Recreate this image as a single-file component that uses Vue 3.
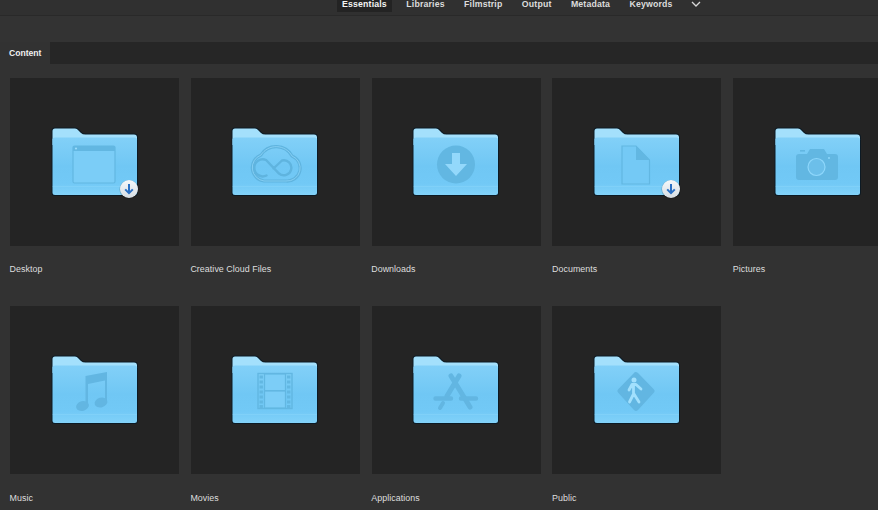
<script setup>
const tabs = ["Essentials", "Libraries", "Filmstrip", "Output", "Metadata", "Keywords"];

const folders = [
  { name: "Desktop", icon: "window", badge: true },
  { name: "Creative Cloud Files", icon: "cloud" },
  { name: "Downloads", icon: "download" },
  { name: "Documents", icon: "document", badge: true },
  { name: "Pictures", icon: "camera" },
  { name: "Music", icon: "music" },
  { name: "Movies", icon: "film" },
  { name: "Applications", icon: "apps" },
  { name: "Public", icon: "public" },
];

const perforations = [32.5, 37.5, 42.5, 47.5, 52.5, 57.5, 62];
</script>

<template>
  <div class="app">
    <header class="topbar">
      <nav class="tabs">
        <span v-for="(tab, i) in tabs" :key="tab" class="tab" :class="{ active: i === 0 }">{{ tab }}</span>
        <svg class="chevron" width="10" height="6" viewBox="0 0 10 6">
          <path d="M1 1 L5 5 L9 1" fill="none" stroke="#d8d8d8" stroke-width="1.3" />
        </svg>
      </nav>
    </header>
    <div class="toolbar"></div>
    <div class="panel-head">
      <div class="panel-tab">Content</div>
    </div>
    <main class="grid">
      <div v-for="f in folders" :key="f.name" class="item">
        <div class="tile">
          <svg width="110" height="95" viewBox="0 0 110 95" class="folder">
            <defs>
              <linearGradient id="body" x1="0" y1="0" x2="0" y2="1">
                <stop offset="0" stop-color="#82d0f8" />
                <stop offset="0.5" stop-color="#70c7f4" />
                <stop offset="0.8" stop-color="#72c9f6" />
                <stop offset="1" stop-color="#82d2f9" />
              </linearGradient>
              <linearGradient id="badge" x1="0" y1="0" x2="0" y2="1">
                <stop offset="0" stop-color="#f6f8fa" />
                <stop offset="1" stop-color="#d6dde3" />
              </linearGradient>
            </defs>
            <path
              d="M15 12.5 H35 Q37.5 12.5 39 14.5 L41.5 17 Q43 18.5 45.5 18.5 H94 Q98 18.5 98 22.5 V77.5 Q98 81 94.5 81 H15 Q11.5 81 11.5 77.5 V16 Q11.5 12.5 15 12.5 Z"
              fill="#0c1a24"
            />
            <path
              d="M15 13.5 H35 Q37 13.5 38.5 15.5 L41 18 Q42.5 19.5 45.5 19.5 H94 Q97 19.5 97 22.5 V30 H12.5 V16 Q12.5 13.5 15 13.5 Z"
              fill="#a4e0fc"
            />
            <path
              d="M12.5 24.5 Q12.5 22.5 15 22.5 H94.5 Q97 22.5 97 24.5 V77.5 Q97 80 94.5 80 H15 Q12.5 80 12.5 77.5 Z"
              fill="url(#body)"
            />
            <rect x="12.5" y="71" width="84.5" height="0.8" fill="#9be0fe" opacity="0.35" />

            <g v-if="f.icon === 'window'">
              <rect x="33" y="31" width="42" height="37" rx="1.5" fill="#7bcdf7" stroke="#62b7e2" stroke-width="1.2" />
              <rect x="33" y="31" width="42" height="5" fill="#62b7e2" />
              <circle cx="36" cy="33.5" r="1.1" fill="#9bdcfc" />
            </g>

            <g v-else-if="f.icon === 'cloud'" fill="none">
              <path
                d="M44 66 H66 A13 13 0 0 0 72 41 A18 18 0 0 0 41 40 A13.5 13.5 0 0 0 44 66 Z"
                stroke="#5fb4df"
                stroke-width="3.2"
              />
              <path
                d="M44 66 H66 A13 13 0 0 0 72 41 A18 18 0 0 0 41 40 A13.5 13.5 0 0 0 44 66 Z"
                stroke="#93d9fb"
                stroke-width="0.7"
              />
              <path
                d="M46.5 60.5 A8.5 8.5 0 1 1 46 45 L59 58.5 A7.5 7.5 0 1 0 62 45.5 L53.5 53.5"
                stroke="#5fb4df"
                stroke-width="2.4"
                stroke-linecap="round"
              />
            </g>

            <g v-else-if="f.icon === 'download'">
              <circle cx="55" cy="49.5" r="19" fill="#62b7e2" />
              <path d="M51 38 H59 V49 H66 L55 61 L44 49 H51 Z" fill="#93d8fb" />
            </g>

            <g v-else-if="f.icon === 'document'">
              <path d="M40 31 H54 L67.5 45 V69 H40 Z" fill="#74c9f5" stroke="#62b7e2" stroke-width="1.2" />
              <path d="M54 31 L67.5 45 H54 Z" fill="#62b7e2" />
            </g>

            <g v-else-if="f.icon === 'camera'">
              <path
                d="M33 42 Q33 39 36 39 H44 L47 34 H61 L64 39 H72 Q75 39 75 42 V62 Q75 65 72 65 H36 Q33 65 33 62 Z"
                fill="#62b7e2"
              />
              <rect x="37" y="35" width="5" height="1.6" fill="#62b7e2" />
              <circle cx="53.5" cy="52" r="8.5" fill="#6cbfea" stroke="#8ed7fb" stroke-width="1.2" />
              <circle cx="66" cy="43" r="1" fill="#8ed7fb" />
            </g>

            <g v-else-if="f.icon === 'music'" fill="#62b6e2">
              <path d="M45.5 33 L67 29 V60 H65 V37.5 L48 41 V63 H45.5 Z" />
              <ellipse cx="42.5" cy="63" rx="6.5" ry="4.8" transform="rotate(-15 42.5 63)" />
              <ellipse cx="61" cy="59.5" rx="6.5" ry="4.8" transform="rotate(-15 61 59.5)" />
            </g>

            <g v-else-if="f.icon === 'film'">
              <rect x="38" y="30.5" width="34" height="35" fill="none" stroke="#62b7e2" stroke-width="1.4" />
              <rect x="44.5" y="31" width="21" height="34" fill="#7ccdf7" stroke="#62b7e2" stroke-width="1.2" />
              <rect x="44.5" y="47" width="21" height="1.6" fill="#62b7e2" />
              <g fill="#62b7e2">
                <rect v-for="y in perforations" :key="'l' + y" x="39.5" :y="y" width="3.4" height="3" />
                <rect v-for="y in perforations" :key="'r' + y" x="67" :y="y" width="3.4" height="3" />
              </g>
            </g>

            <g v-else-if="f.icon === 'apps'" fill="none" stroke="#62b6e2" stroke-linecap="round">
              <path d="M58 33 L46 53" stroke-width="5" />
              <path d="M50 33 L69 64" stroke-width="5" />
              <path d="M34.5 55.5 H50 M60 55.5 H75" stroke-width="4.4" />
              <path d="M42 60 L39 65" stroke-width="4" />
            </g>

            <g v-else-if="f.icon === 'public'">
              <path d="M53.5 29 Q55 29 56 30 L72 46.5 Q73.5 48 72 49.5 L56 67 Q54 69 52 67 L36 49.5 Q34.5 48 36 46.5 L52 30 Q52.5 29 53.5 29 Z" fill="#62b6e2" />
              <circle cx="52" cy="37" r="2.5" fill="#a2e0fd" />
              <path
                d="M47 47 L50 41.5 H54 L59 46 M51.5 42 V51 L47.5 59 M52 51 L57 59"
                fill="none"
                stroke="#a2e0fd"
                stroke-width="2.8"
                stroke-linecap="round"
                stroke-linejoin="round"
              />
            </g>

            <g v-if="f.badge">
              <circle cx="89" cy="74.5" r="9.6" fill="#000" opacity="0.18" />
              <circle cx="89" cy="74" r="9" fill="url(#badge)" />
              <path d="M89 69 V78 M85.2 74.4 L89 78.2 L92.8 74.4" fill="none" stroke="#2a70c4" stroke-width="2" />
            </g>
          </svg>
        </div>
        <div class="label">{{ f.name }}</div>
      </div>
    </main>
  </div>
</template>

<style scoped>
.app {
  width: 878px;
  height: 510px;
  overflow: hidden;
  background: #323232;
  font-family: "Liberation Sans", Arial, sans-serif;
  color: #e4e4e4;
}

.topbar {
  height: 16px;
  background: #303030;
  border-bottom: 1px solid #292929;
  box-sizing: border-box;
}

.tabs {
  display: flex;
  align-items: flex-start;
  padding-left: 337px;
}

.tab {
  height: 12px;
  line-height: 9px;
  padding: 0 5px;
  margin-right: 9.4px;
  font-size: 8.75px;
  font-weight: 700;
  letter-spacing: 0.16px;
  color: #dcdcdc;
}

.tab.active {
  background: #232323;
  color: #f4f4f4;
}

.chevron {
  margin: 1px 0 0 4px;
}

.toolbar {
  height: 26px;
  background: #333333;
}

.panel-head {
  height: 22px;
  background: #262626;
}

.panel-tab {
  width: 51px;
  height: 22px;
  box-sizing: border-box;
  padding-left: 9px;
  line-height: 22px;
  background: #323232;
  border-right: 1px solid #262626;
  font-size: 8.6px;
  font-weight: 700;
  color: #f0f0f0;
}

.grid {
  display: grid;
  grid-template-columns: repeat(5, 169px);
  column-gap: 11.8px;
  row-gap: 31px;
  padding: 14px 0 0 10px;
}

.tile {
  height: 168px;
  background: #242424;
  display: flex;
  align-items: center;
  justify-content: center;
}

.folder {
  display: block;
}

.label {
  margin: 17.4px 0 0 -0.4px;
  line-height: 12px;
  font-size: 8.9px;
  letter-spacing: 0.05px;
  color: #dedede;
  white-space: nowrap;
}
</style>
